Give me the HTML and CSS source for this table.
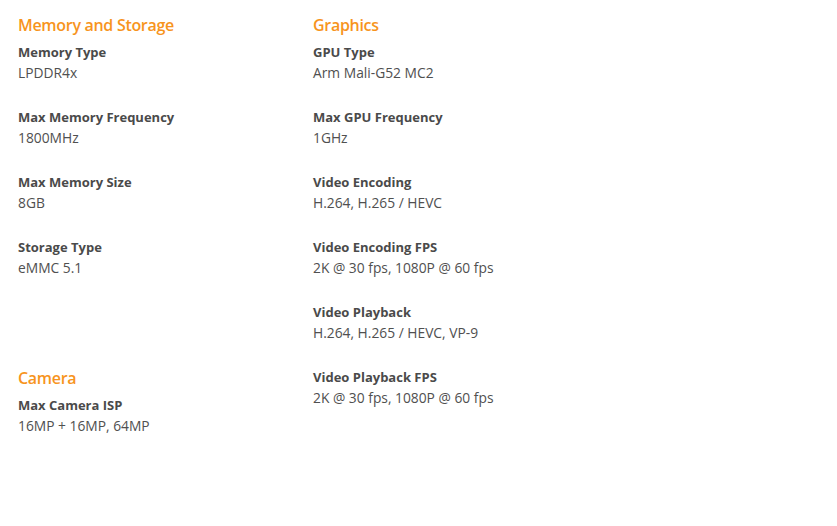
FILE: index.html
```html
<!DOCTYPE html>
<html>
<head>
<meta charset="utf-8">
<link rel="stylesheet" href="styles.css">
</head>
<body>
<div class="page">
  <div class="col col-left">
    <section class="group">
      <h2 class="heading">Memory and Storage</h2>
      <div class="item"><div class="label">Memory Type</div><div class="value">LPDDR4x</div></div>
      <div class="item"><div class="label">Max Memory Frequency</div><div class="value">1800MHz</div></div>
      <div class="item"><div class="label">Max Memory Size</div><div class="value">8GB</div></div>
      <div class="item"><div class="label">Storage Type</div><div class="value">eMMC 5.1</div></div>
    </section>
    <section class="group group-camera">
      <h2 class="heading">Camera</h2>
      <div class="item"><div class="label">Max Camera ISP</div><div class="value">16MP + 16MP, 64MP</div></div>
    </section>
  </div>
  <div class="col col-right">
    <section class="group">
      <h2 class="heading">Graphics</h2>
      <div class="item"><div class="label">GPU Type</div><div class="value">Arm Mali-G52 MC2</div></div>
      <div class="item"><div class="label">Max GPU Frequency</div><div class="value">1GHz</div></div>
      <div class="item"><div class="label">Video Encoding</div><div class="value">H.264, H.265 / HEVC</div></div>
      <div class="item"><div class="label">Video Encoding FPS</div><div class="value">2K @ 30 fps, 1080P @ 60 fps</div></div>
      <div class="item"><div class="label">Video Playback</div><div class="value">H.264, H.265 / HEVC, VP-9</div></div>
      <div class="item"><div class="label">Video Playback FPS</div><div class="value">2K @ 30 fps, 1080P @ 60 fps</div></div>
    </section>
  </div>
</div>
</body>
</html>
```

FILE: styles.css
```css
html, body {
  margin: 0;
  padding: 0;
  background: #ffffff;
}
body {
  font-family: "Open Sans", "Noto Sans", sans-serif;
  color: #555555;
}
.page {
  display: flex;
  padding: 14px 0 0 18px;
}
.col-left {
  width: 295px;
}
.heading {
  margin: 0 0 6px 0;
  font-size: 16px;
  line-height: 22px;
  font-weight: 600;
  color: #f7941d;
  letter-spacing: -0.3px;
}
.item {
  margin-bottom: 24px;
}
.label {
  font-size: 13px;
  line-height: 20px;
  font-weight: 700;
  color: #4a4a4a;
  letter-spacing: 0;
}
.value {
  font-size: 13.8px;
  line-height: 21px;
  color: #505050;
  letter-spacing: 0;
}
.group-camera {
  margin-top: 89px;
}
```
